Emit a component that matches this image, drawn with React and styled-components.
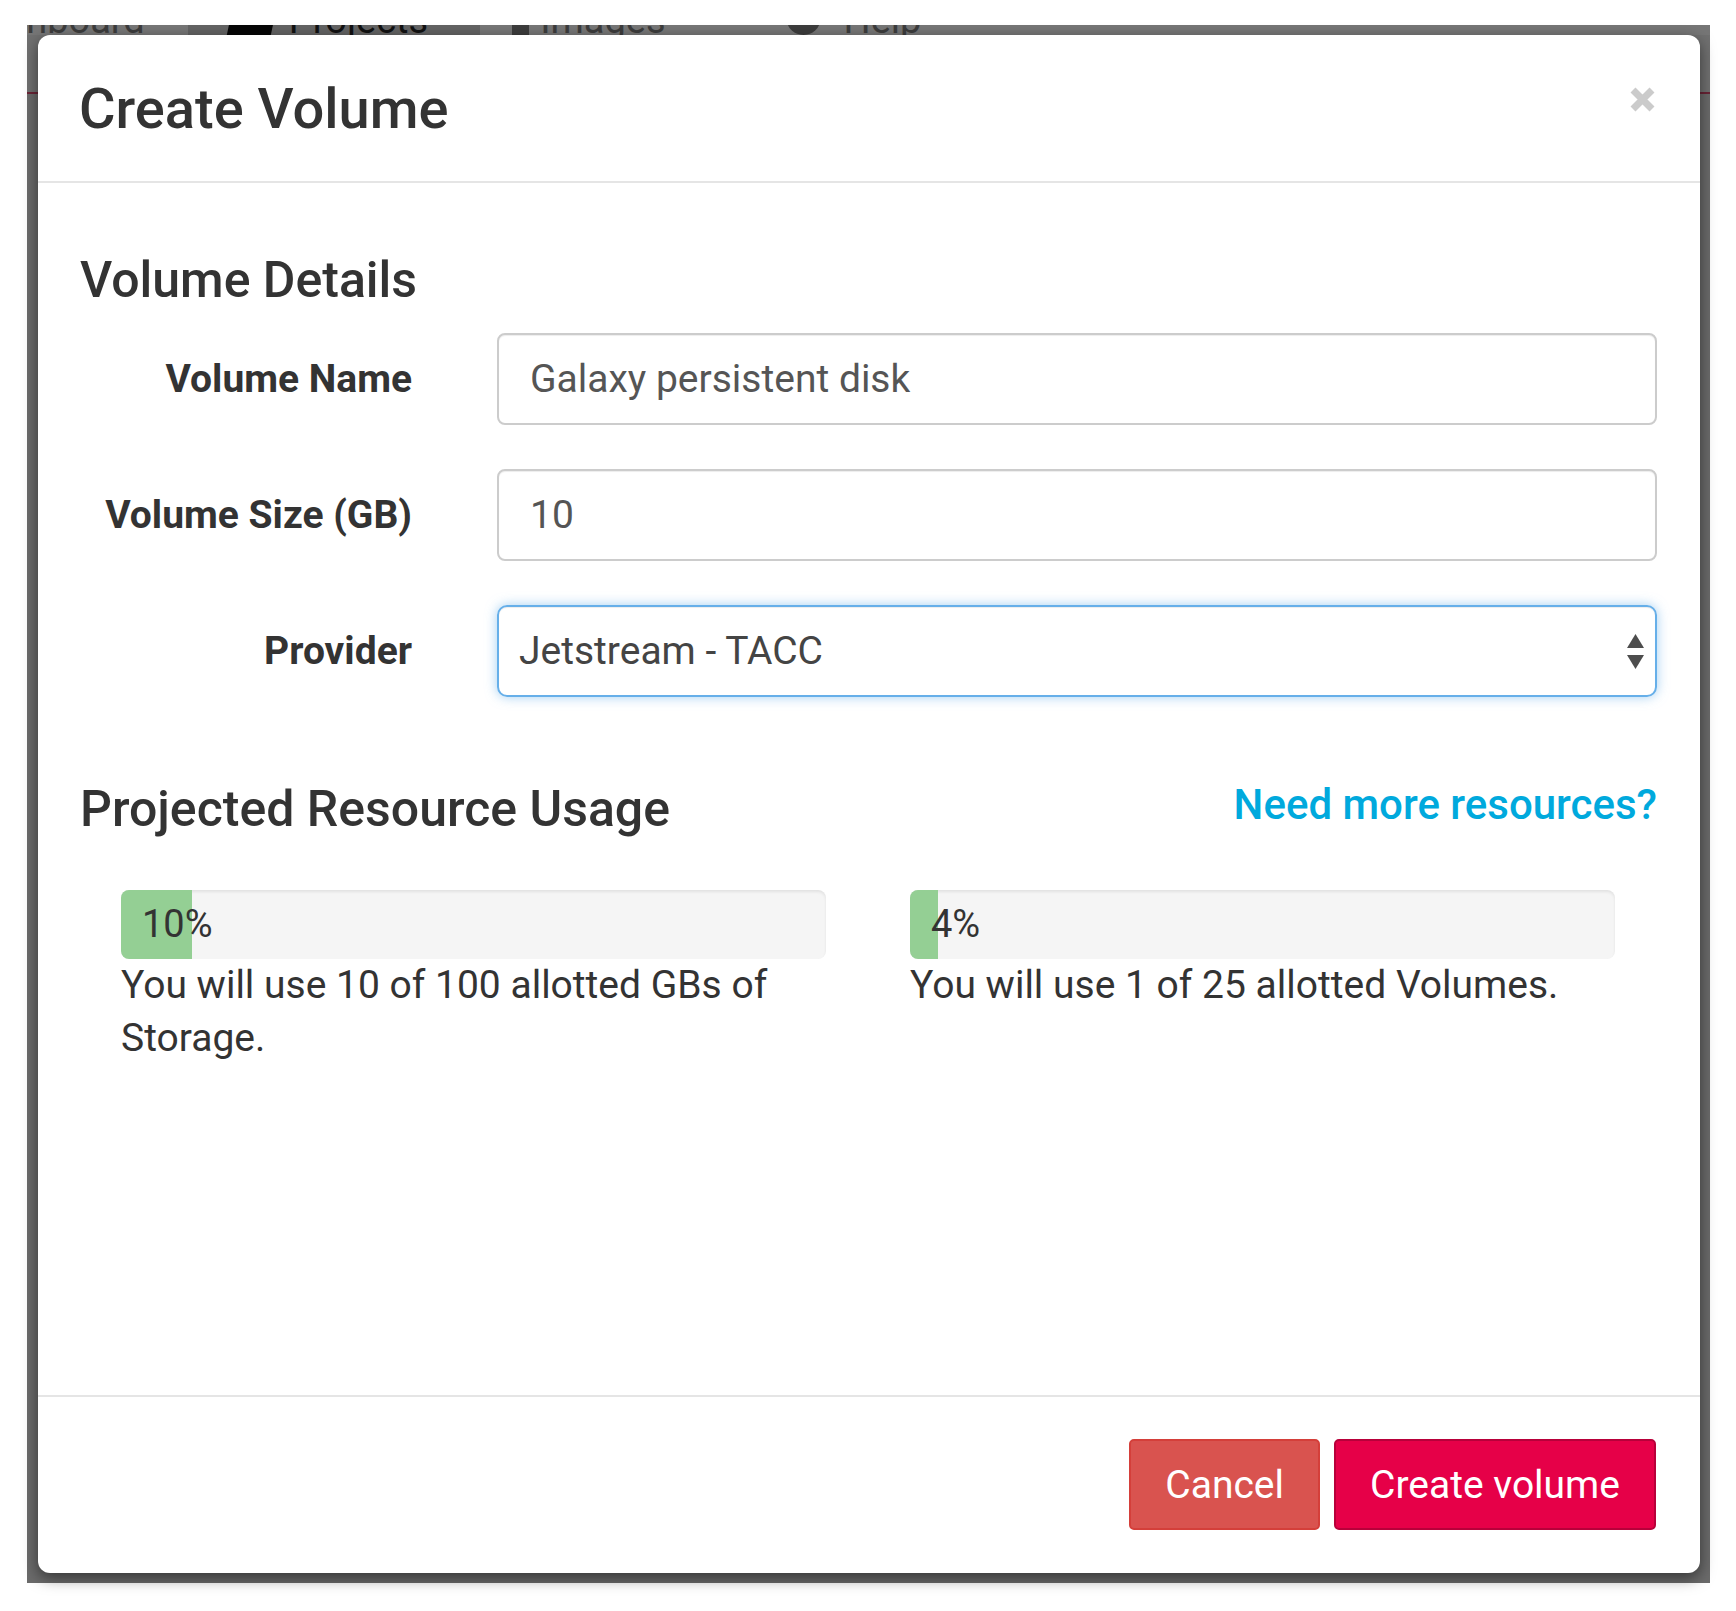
import React from "react";
import styled, {createGlobalStyle} from "styled-components";

const GlobalStyle = createGlobalStyle`
    html, body {
        margin: 0;
        padding: 0;
        background: #fff;
    }
    body {
        font-family: Roboto, "Liberation Sans", sans-serif;
        color: #333;
    }
    * {
        box-sizing: border-box;
    }
`;

const usage = [
    {percent: 10, text: "You will use 10 of 100 allotted GBs of Storage."},
    {percent: 4, text: "You will use 1 of 25 allotted Volumes."},
];

function SelectArrows() {
    return (
        <svg width="17" height="35" viewBox="0 0 17 35">
            <polygon points="0,14 8.5,0 17,14" fill="#4d4d4d"/>
            <polygon points="0,21 17,21 8.5,35" fill="#4d4d4d"/>
        </svg>
    );
}

function CloseIcon() {
    return (
        <svg width="27" height="27" viewBox="0 0 27 27">
            <path d="M4 4 L23 23 M23 4 L4 23" stroke="#cbcbcb" strokeWidth="7"/>
        </svg>
    );
}

function App() {
    return (
        <Page>
            <GlobalStyle/>
            <Backdrop>
                {/* the page behind the overlay, only its lower edge peeks out */}
                <NavStrip>
                    <NavItem $offset={-66}>Dashboard</NavItem>
                    <NavItem $offset={43} $active>
                        <NavIcon $w={44} $dark/>
                        Projects
                    </NavItem>
                    <NavItem $offset={32} $gap={11}>
                        <NavIcon $w={17}/>
                        Images
                    </NavItem>
                    <NavItem $offset={121} $gap={24}>
                        <NavIcon $w={33} $round/>
                        Help
                    </NavItem>
                </NavStrip>

                <Modal>
                    <Header>
                        <Title>Create Volume</Title>
                        <CloseButton aria-label="Close"><CloseIcon/></CloseButton>
                    </Header>

                    <Body>
                        <SectionTitle>Volume Details</SectionTitle>
                        <Form>
                            <Label>Volume Name</Label>
                            <TextInput defaultValue="Galaxy persistent disk"/>
                            <Label>Volume Size (GB)</Label>
                            <TextInput defaultValue="10"/>
                            <Label>Provider</Label>
                            <SelectBox>
                                <span>Jetstream - TACC</span>
                                <SelectArrows/>
                            </SelectBox>
                        </Form>

                        <UsageHeader>
                            <SectionTitle>Projected Resource Usage</SectionTitle>
                            <MoreLink href="#">Need more resources?</MoreLink>
                        </UsageHeader>

                        <UsageGrid>
                            {usage.map((item, index) => (
                                <div key={index}>
                                    <Bar>
                                        <BarFill style={{width: `${item.percent}%`}}/>
                                        <BarLabel>{item.percent}%</BarLabel>
                                    </Bar>
                                    <UsageText>{item.text}</UsageText>
                                </div>
                            ))}
                        </UsageGrid>
                    </Body>

                    <Footer>
                        <Button $variant="cancel">Cancel</Button>
                        <Button $variant="create">Create volume</Button>
                    </Footer>
                </Modal>
            </Backdrop>
        </Page>
    );
}

const Page = styled.div`
    width: 1736px;
    height: 1611px;
    padding: 25px 26px 28px 27px;
`;

const Backdrop = styled.div`
    height: 100%;
    display: flex;
    flex-direction: column;
    padding: 0 10px 10px 11px;
    background: linear-gradient(to bottom, #707070 0, #707070 67px, #6b2436 67px, #6b2436 69px, #6b6b6b 69px);
`;

const NavStrip = styled.div`
    height: 10px;
    margin: 0 -10px 0 -11px;
    overflow: hidden;
    display: flex;
    align-items: flex-start;
    background: #767676;
`;

const NavItem = styled.div`
    flex-shrink: 0;
    display: flex;
    align-items: flex-end;
    gap: ${props => props.$gap || 15}px;
    height: 38px;
    margin-top: -24px;
    margin-left: ${props => props.$offset}px;
    padding: ${props => props.$active ? "0 52px 0 42px" : "0"};
    font-size: 38px;
    line-height: 38px;
    white-space: nowrap;
    color: ${props => props.$active ? "#111" : "#3c3c3c"};
    background: ${props => props.$active ? "#636363" : "transparent"};
`;

const NavIcon = styled.span`
    width: ${props => props.$w}px;
    height: 30px;
    margin-bottom: 4px;
    background: ${props => props.$dark ? "#050505" : "#3c3c3c"};
    border-radius: ${props => props.$round ? "50%" : "0"};
    transform: ${props => props.$dark ? "skewX(-12deg)" : "none"};
`;

const Modal = styled.div`
    flex: 1;
    display: flex;
    flex-direction: column;
    background: #fff;
    border-radius: 12px;
    box-shadow: 0 5px 15px rgba(0, 0, 0, 0.5);
`;

const Header = styled.div`
    display: flex;
    justify-content: space-between;
    align-items: flex-start;
    padding: 43px 44px 40px 41px;
    border-bottom: 2px solid #e5e5e5;
`;

const Title = styled.h4`
    margin: 0;
    font-size: 56px;
    font-weight: 500;
    line-height: 63px;
    color: #333;
`;

const CloseButton = styled.button`
    margin-top: 8px;
    padding: 0;
    border: none;
    background: none;
    display: flex;
    cursor: pointer;
`;

const Body = styled.div`
    flex: 1;
    padding: 70px 43px 0 42px;
`;

const SectionTitle = styled.h3`
    margin: 0;
    font-size: 50px;
    font-weight: 500;
    line-height: 55px;
    color: #333;
`;

const Form = styled.div`
    display: grid;
    grid-template-columns: 332px 1fr;
    column-gap: 85px;
    row-gap: 44px;
    margin-top: 25px;
`;

const Label = styled.label`
    text-align: right;
    font-size: 39px;
    font-weight: 700;
    line-height: 92px;
    color: #333;
`;

const TextInput = styled.input`
    height: 92px;
    width: 100%;
    padding: 0 31px;
    border: 2px solid #cccccc;
    border-radius: 8px;
    font-family: Roboto, "Liberation Sans", sans-serif;
    font-size: 39px;
    color: #555;
    background: #fff;
    box-shadow: inset 0 1px 1px rgba(0, 0, 0, 0.075);
    outline: none;
`;

const SelectBox = styled.div`
    height: 92px;
    display: flex;
    align-items: center;
    justify-content: space-between;
    padding: 0 11px 0 20px;
    border: 2px solid #66afe9;
    border-radius: 10px;
    font-size: 39px;
    color: #444;
    box-shadow: inset 0 1px 1px rgba(0, 0, 0, 0.075), 0 0 12px rgba(102, 175, 233, 0.6);
`;

const UsageHeader = styled.div`
    display: flex;
    justify-content: space-between;
    align-items: flex-start;
    margin-top: 85px;
`;

const MoreLink = styled.a`
    font-size: 42px;
    font-weight: 500;
    line-height: 45px;
    color: #00a9dd;
    text-decoration: none;
`;

const UsageGrid = styled.div`
    display: grid;
    grid-template-columns: 1fr 1fr;
    column-gap: 84px;
    padding: 0 42px 0 41px;
    margin-top: 53px;
`;

const Bar = styled.div`
    height: 69px;
    display: grid;
    border-radius: 8px;
    overflow: hidden;
    background: #f5f5f5;
    box-shadow: inset 0 2px 3px rgba(0, 0, 0, 0.08);
`;

const BarFill = styled.div`
    grid-area: 1 / 1;
    background: #94cf94;
`;

const BarLabel = styled.span`
    grid-area: 1 / 1;
    padding-left: 21px;
    font-size: 38px;
    line-height: 69px;
    color: #333;
`;

const UsageText = styled.p`
    margin: 0;
    font-size: 39px;
    line-height: 53px;
    color: #333;
`;

const Footer = styled.div`
    display: flex;
    justify-content: flex-end;
    gap: 14px;
    padding: 42px 44px 43px 42px;
    border-top: 2px solid #e5e5e5;
`;

const Button = styled.button`
    height: 91px;
    padding: 0 34px;
    border: 2px solid ${props => props.$variant === "cancel" ? "#d43f3a" : "#b8003a"};
    border-radius: 5px;
    background: ${props => props.$variant === "cancel" ? "#d9534f" : "#e60048"};
    color: #fff;
    font-family: Roboto, "Liberation Sans", sans-serif;
    font-size: 39px;
    cursor: pointer;
`;

export default App;
